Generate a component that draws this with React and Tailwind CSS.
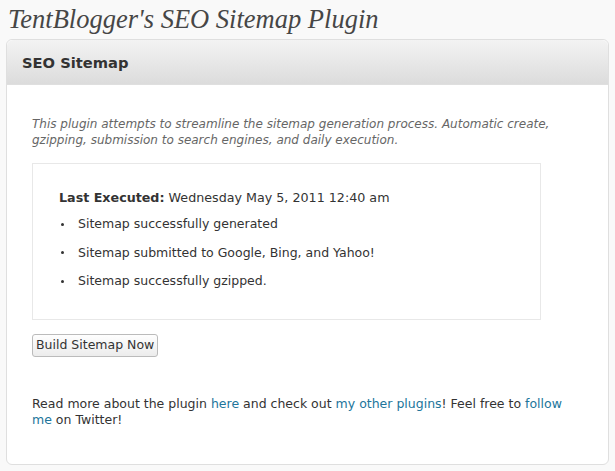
import React from 'react';

function App() {
  const results = [
    'Sitemap successfully generated',
    'Sitemap submitted to Google, Bing, and Yahoo!',
    'Sitemap successfully gzipped.',
  ];

  return (
    <div className="min-h-[471px] bg-[#f9f9f9] px-[6px] pt-[4px] text-[#333] font-['DejaVu_Sans',Verdana,sans-serif]">
      <h2 className="pl-[2px] text-[26.5px] leading-[30px] italic text-[#464646] font-['Liberation_Serif',Georgia,serif]">
        TentBlogger's SEO Sitemap Plugin
      </h2>

      <div className="mt-[5px] w-[603px] rounded-[6px] border border-[#dfdfdf] bg-white">
        <div className="h-[45px] flex items-center pl-[15px] pt-[2px] rounded-t-[6px] border-b border-[#dfdfdf] bg-gradient-to-b from-[#f3f3f3] to-[#dcdcdc]">
          <h3 className="text-[14.7px] font-bold text-[#333]">SEO Sitemap</h3>
        </div>

        <div className="px-[25px] pt-[31px] pb-[36px]">
          <p className="text-[12px] leading-[16px] italic text-[#666]">
            This plugin attempts to streamline the sitemap generation process. Automatic create,
            gzipping, submission to search engines, and daily execution.
          </p>

          <div className="mt-[15px] w-[509px] h-[157px] border border-[#e8e8e8] pl-[26px] pt-[25px]">
            <p className="text-[12.7px] leading-[18px]">
              <span className="font-bold">Last Executed:</span> Wednesday May 5, 2011 12:40 am
            </p>
            <ul className="mt-[8px] flex flex-col gap-[10.5px] text-[12.5px] leading-[18px]">
              {results.map((r) => (
                <li key={r} className="flex items-center">
                  <span className="ml-[2px] mr-[14px] w-[3px] h-[3px] rounded-full bg-[#333]"></span>
                  {r}
                </li>
              ))}
            </ul>
          </div>

          <button
            type="button"
            className="mt-[14px] h-[23px] px-[3px] rounded-[3px] border border-[#bbb] bg-gradient-to-b from-[#fefefe] to-[#ececec] text-[12.5px] text-[#333]"
          >
            Build Sitemap Now
          </button>

          <p className="mt-[39px] text-[12.5px] leading-[16px]">
            Read more about the plugin <a className="text-[#21759b]" href="#">here</a> and check out{' '}
            <a className="text-[#21759b]" href="#">my other plugins</a>! Feel free to{' '}
            <a className="text-[#21759b]" href="#">follow me</a> on Twitter!
          </p>
        </div>
      </div>
    </div>
  );
}

export default App;
